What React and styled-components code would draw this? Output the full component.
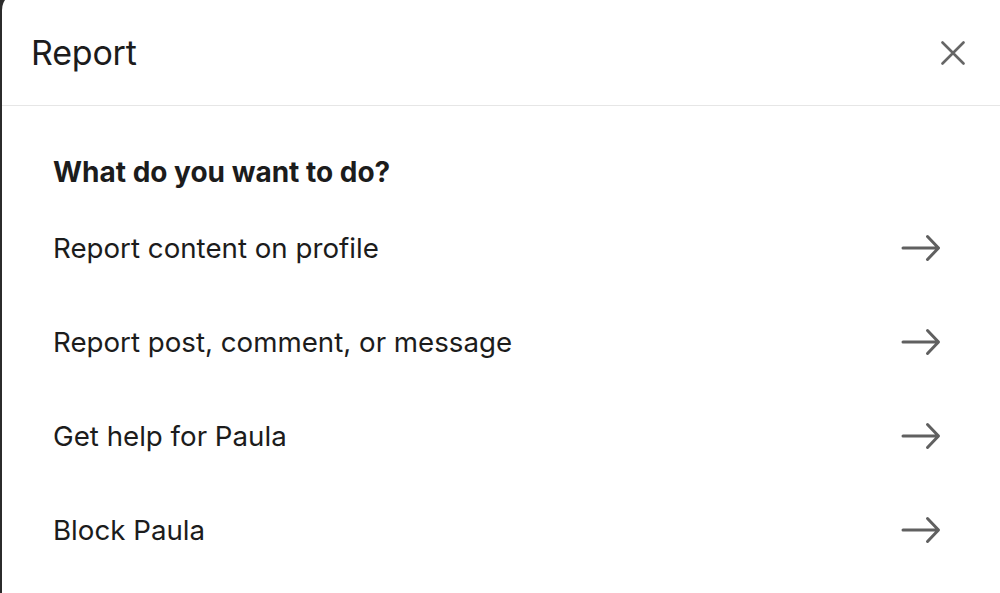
import styled, { createGlobalStyle } from "styled-components";

const GlobalStyle = createGlobalStyle`
  html, body {
    margin: 0;
    padding: 0;
    background: #2b2b2b;
    overflow: hidden;
  }
  * {
    box-sizing: border-box;
  }
`;

const options = [
  "Report content on profile",
  "Report post, comment, or message",
  "Get help for Paula",
  "Block Paula",
];

const CloseIcon = () => (
  <svg width="24" height="24" viewBox="0 0 24 24" fill="none">
    <path d="M1.5 1.5 L22.5 22.5 M22.5 1.5 L1.5 22.5" stroke="#666" strokeWidth="2.6" strokeLinecap="round" />
  </svg>
);

const ArrowIcon = () => (
  <svg width="40" height="28" viewBox="0 0 40 28" fill="none">
    <path d="M2 14 H37 M26.5 2.5 L37.5 14 L26.5 25.5" stroke="#606060" strokeWidth="3" strokeLinecap="round" strokeLinejoin="round" />
  </svg>
);

const App = () => {
  return (
    <>
      <GlobalStyle />
      <Modal>
        <Header>
          <Title>Report</Title>
          <CloseButton aria-label="Close">
            <CloseIcon />
          </CloseButton>
        </Header>
        <Body>
          <Question>What do you want to do?</Question>
          <OptionList>
            {options.map((label) => (
              <Option key={label}>
                <span>{label}</span>
                <ArrowIcon />
              </Option>
            ))}
          </OptionList>
        </Body>
      </Modal>
    </>
  );
};

const Modal = styled.div`
  width: 1012px;
  height: 620px;
  margin: -8px 0 0 2px;
  background: #ffffff;
  border-radius: 18px;
  font-family: Inter, "Noto Sans", sans-serif;
  color: #1c1c1c;
`;

const Header = styled.div`
  display: flex;
  align-items: center;
  justify-content: space-between;
  height: 114px;
  padding: 8px 0 0 29px;
  border-bottom: 1.5px solid #e6e6e6;
`;

const Title = styled.h1`
  margin: 0;
  font-size: 34px;
  font-weight: 400;
  letter-spacing: -0.2px;
`;

const CloseButton = styled.button`
  display: flex;
  align-items: center;
  justify-content: center;
  width: 48px;
  height: 48px;
  margin-right: 37px;
  padding: 0;
  border: none;
  background: none;
  cursor: pointer;
`;

const Body = styled.div`
  padding: 50px 73px 0 51px;
`;

const Question = styled.h2`
  margin: 0;
  font-size: 28px;
  font-weight: 700;
  line-height: 32px;
`;

const OptionList = styled.div`
  display: flex;
  flex-direction: column;
  margin-top: 13px;
`;

const Option = styled.div`
  display: flex;
  align-items: center;
  justify-content: space-between;
  height: 94px;
  font-size: 27.7px;
  cursor: pointer;
`;

export default App;
